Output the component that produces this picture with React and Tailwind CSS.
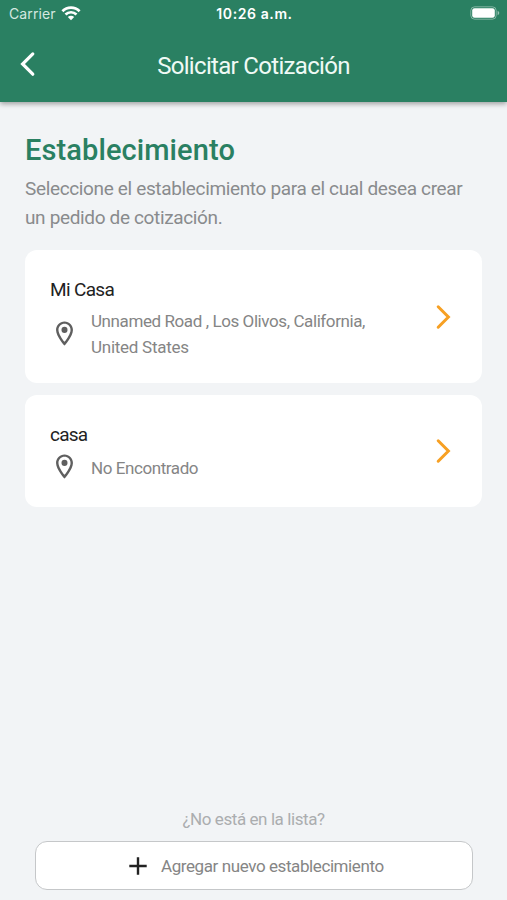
import React from 'react';

const establishments = [
  {
    id: 1,
    name: 'Mi Casa',
    lines: [
      { text: 'Unnamed Road , Los Olivos, California,', className: 'tracking-[-0.41px]' },
      { text: 'United States', className: 'tracking-[-0.26px]' },
    ],
    cardClass: 'h-[133px] pt-[25px]',
    nameClass: 'tracking-[-0.65px]',
    rowClass: '',
    pinClass: 'pb-[2px]',
  },
  {
    id: 2,
    name: 'casa',
    lines: [{ text: 'No Encontrado', className: 'tracking-[-0.42px]' }],
    cardClass: 'h-[112px] pt-[25px]',
    nameClass: 'tracking-[-0.75px]',
    rowClass: 'mt-[2px]',
    pinClass: 'pb-[3px]',
  },
];

const WifiIcon = () => (
  <svg width="20" height="15" viewBox="0 0 20 15" fill="none" stroke="currentColor" strokeWidth="2.7">
    <path d="M1.4 5.2C6.2 0.4 13.8 0.4 18.6 5.2" />
    <path d="M4.5 8.5C7.6 5.5 12.4 5.5 15.5 8.5" />
    <path d="M10 14.2L6.8 11C8.6 9.3 11.4 9.3 13.2 11Z" fill="currentColor" stroke="none" />
  </svg>
);

const BatteryIcon = () => (
  <svg width="30" height="14" viewBox="0 0 30 14" fill="none">
    <rect x="0.8" y="0.8" width="25.4" height="12.4" rx="3.8" stroke="#fff" strokeOpacity="0.4" strokeWidth="1" />
    <rect x="2.2" y="2.2" width="22.6" height="9.6" rx="2.3" fill="#fff" />
    <path d="M27.6 4.8C29.8 5.7 29.8 8.3 27.6 9.2Z" fill="#fff" fillOpacity="0.5" />
  </svg>
);

const BackIcon = () => (
  <svg width="16" height="26" viewBox="0 0 16 26" fill="none" stroke="currentColor" strokeWidth="3.2" strokeLinecap="round">
    <path d="M12.8 2.9L2.6 13L12.8 23.2" />
  </svg>
);

const ForwardIcon = () => (
  <svg width="16" height="26" viewBox="0 0 16 26" fill="none" stroke="#f7a023" strokeWidth="3" strokeLinecap="round">
    <path d="M2.2 2.8L12.4 13L2.2 23.2" />
  </svg>
);

const PinIcon = () => (
  <svg width="29" height="29" viewBox="0 0 24 24" fill="#5f5f5f">
    <path d="M12 2C8.13 2 5 5.13 5 9c0 5.25 7 13 7 13s7-7.75 7-13c0-3.87-3.13-7-7-7zM7 9c0-2.76 2.24-5 5-5s5 2.24 5 5c0 2.88-2.88 7.19-5 9.88C9.92 16.21 7 11.85 7 9z" />
    <circle cx="12" cy="9" r="2.5" />
  </svg>
);

const PlusIcon = () => (
  <svg width="18" height="18" viewBox="0 0 18 18" stroke="#222" strokeWidth="2.4">
    <path d="M0.3 9H17.7M9 0.3V17.7" />
  </svg>
);

const EstablishmentCard = ({ item }) => (
  <button className={`flex w-full rounded-xl bg-white pl-[25px] pr-[30px] text-left ${item.cardClass}`}>
    <div className="flex-1">
      <h2 className={`text-[19px] leading-[30px] text-[#222] ${item.nameClass}`}>{item.name}</h2>
      <div className={`flex items-center ${item.rowClass}`}>
        <div className={item.pinClass}>
          <PinIcon />
        </div>
        <div className="ml-[12px] py-[3px] text-[17px] leading-[26px] text-[#858585]">
          {item.lines.map(line => (
            <p key={line.text} className={`whitespace-nowrap ${line.className}`}>{line.text}</p>
          ))}
        </div>
      </div>
    </div>
    <div className="-mt-[25px] flex items-center self-stretch">
      <ForwardIcon />
    </div>
  </button>
);

const App = () => {
  return (
    <div className="flex h-[900px] w-[507px] flex-col overflow-hidden bg-[#f2f4f6] font-['Roboto',sans-serif]">
      <header className="h-[102px] shrink-0 bg-[#2a8062] text-white shadow-[0_2px_5px_rgba(0,0,0,0.35)]">
        <div className="grid h-[26px] grid-cols-3 items-center pl-[9px] pr-[7px] font-['Inter',sans-serif]">
          <div className="flex items-center gap-[5px]">
            <span className="text-[14px] tracking-[0.1px] text-[#d5e8e0]">Carrier</span>
            <WifiIcon />
          </div>
          <span className="text-center text-[14px] font-semibold tracking-[0.6px] whitespace-nowrap">10:26 a.m.</span>
          <div className="flex justify-end">
            <BatteryIcon />
          </div>
        </div>
        <div className="flex h-[78px] items-center pl-[20px]">
          <button className="mb-[2px]">
            <BackIcon />
          </button>
          <h1 className="flex-1 pt-[1px] pr-[36px] text-center text-[24px] tracking-[-0.68px] text-[#effaf5]">Solicitar Cotización</h1>
        </div>
      </header>

      <main className="px-[25px] pt-[29px]">
        <h2 className="text-[29px] leading-[38px] font-medium tracking-[0.1px] text-[#2a8062]">Establecimiento</h2>
        <div className="pt-[5px] text-[19px] leading-[29px] tracking-[-0.35px] text-[#898b8d]">
          <p className="whitespace-nowrap">Seleccione el establecimiento para el cual desea crear</p>
          <p className="whitespace-nowrap">un pedido de cotización.</p>
        </div>
        <div className="mt-[18px] flex flex-col gap-[12px]">
          {establishments.map(item => (
            <EstablishmentCard key={item.id} item={item} />
          ))}
        </div>
      </main>

      <footer className="mt-auto px-[35px] pb-[10px]">
        <p className="mb-[9px] text-center text-[17px] leading-[26px] tracking-[-0.42px] text-[#abadaf]">¿No está en la lista?</p>
        <button className="flex h-[49px] w-[438px] items-center rounded-xl border border-[#c5c7c9] bg-white pl-[93px] text-[17px] text-[#858585]">
          <PlusIcon />
          <span className="ml-[14px] pt-[2px] tracking-[-0.41px] whitespace-nowrap">Agregar nuevo establecimiento</span>
        </button>
      </footer>
    </div>
  );
};

export default App;
